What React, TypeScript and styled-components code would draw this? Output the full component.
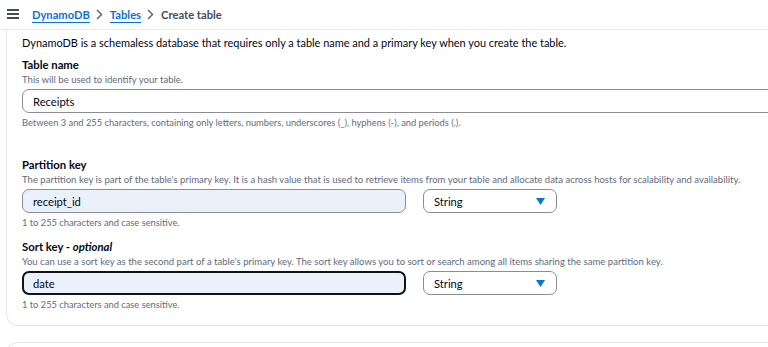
import React from "react";
import styled, { createGlobalStyle } from "styled-components";

const GlobalStyle = createGlobalStyle`
  html, body {
    margin: 0;
    padding: 0;
    background: #ffffff;
    overflow: hidden;
  }
  body {
    font-family: Lato, "Open Sans", sans-serif;
    color: #000716;
  }
`;

const Page = styled.div`
  width: 768px;
  height: 347px;
  overflow: hidden;
`;

const TopBar = styled.div`
  height: 30px;
  display: flex;
  align-items: center;
  padding: 0 0 1px 7px;
  border-bottom: 1px solid #e9ebed;
  box-sizing: border-box;
`;

const Burger = styled.button`
  width: 12px;
  height: 10px;
  padding: 0;
  margin: 0 13px 0 0;
  border: none;
  background: none;
  display: flex;
  flex-direction: column;
  justify-content: space-between;

  span {
    display: block;
    height: 2px;
    background: #414d5c;
  }
`;

const Crumbs = styled.nav`
  display: flex;
  align-items: center;
  font-size: 11.2px;
  font-weight: 700;
`;

const CrumbLink = styled.a`
  color: #0972d3;
  text-decoration: underline;
  text-decoration-thickness: 1px;
  text-underline-offset: 3px;
`;

const CrumbSep = styled.span`
  display: flex;
  margin: 0 7px 0 6px;
`;

const CrumbCurrent = styled.span`
  color: #414d5c;
`;

const Card = styled.section`
  margin: 0 -20px 0 6px;
  border: 1px solid #e3e5e8;
  border-top: none;
  border-radius: 0 0 12px 12px;
  padding: 5px 0 14px 15px;
`;

const NextCard = styled.div`
  margin: 16px -20px 0 6px;
  height: 20px;
  border: 1px solid #e3e5e8;
  border-bottom: none;
  border-radius: 12px 12px 0 0;
`;

const Intro = styled.p`
  margin: 0 0 6px;
  font-size: 10.95px;
  line-height: 16px;
`;

const Field = styled.div<{ $gap?: number }>`
  margin-top: ${(p) => p.$gap ?? 0}px;
`;

const Label = styled.div`
  font-size: 11.3px;
  font-weight: 700;
  line-height: 16px;

  em {
    font-style: italic;
  }
`;

const Description = styled.div`
  font-size: 9.55px;
  line-height: 13px;
  color: #5f6b7a;
  margin-bottom: 3px;
`;

const Constraint = styled.div`
  font-size: 9.3px;
  line-height: 13px;
  color: #5f6b7a;
  margin-top: 3px;
`;

const Row = styled.div`
  display: flex;
  gap: 17px;
`;

const Input = styled.div<{ $width?: number; $filled?: boolean; $focused?: boolean }>`
  box-sizing: border-box;
  height: 24px;
  width: ${(p) => (p.$width ? `${p.$width}px` : "auto")};
  flex: ${(p) => (p.$width ? "none" : "1")};
  display: flex;
  align-items: center;
  font-size: 11.2px;
  border-radius: 7px;
  border: ${(p) => (p.$focused ? "2px solid #0f141a" : "1px solid #8c8c94")};
  padding-left: ${(p) => (p.$focused ? "9px" : "10px")};
  background: ${(p) => (p.$filled ? "#eaf1fb" : "#ffffff")};
`;

const Select = styled.div`
  box-sizing: border-box;
  width: 134px;
  height: 24px;
  display: flex;
  align-items: center;
  justify-content: space-between;
  padding: 0 11px 0 10px;
  border: 1px solid #8c8c94;
  border-radius: 7px;
  font-size: 11.2px;
`;

const Chevron = () => (
  <svg width="7" height="11" viewBox="0 0 7 11">
    <path d="M1 1l4.5 4.5L1 10" fill="none" stroke="#5f6b7a" strokeWidth="1.5" />
  </svg>
);

const Caret = () => (
  <svg width="9" height="7" viewBox="0 0 9 7">
    <path d="M0 0h9L4.5 7z" fill="#0972d3" />
  </svg>
);

const TypeSelect = () => (
  <Select>
    <span>String</span>
    <Caret />
  </Select>
);

export default function App() {
  return (
    <Page>
      <GlobalStyle />
      <TopBar>
        <Burger aria-label="Menu">
          <span />
          <span />
          <span />
        </Burger>
        <Crumbs>
          <CrumbLink>DynamoDB</CrumbLink>
          <CrumbSep>
            <Chevron />
          </CrumbSep>
          <CrumbLink>Tables</CrumbLink>
          <CrumbSep>
            <Chevron />
          </CrumbSep>
          <CrumbCurrent>Create table</CrumbCurrent>
        </Crumbs>
      </TopBar>
      <Card>
        <Intro>
          DynamoDB is a schemaless database that requires only a table name and a primary key when you
          create the table.
        </Intro>
        <Field>
          <Label>Table name</Label>
          <Description>This will be used to identify your table.</Description>
          <Input>Receipts</Input>
          <Constraint>
            Between 3 and 255 characters, containing only letters, numbers, underscores (_), hyphens (-),
            and periods (.).
          </Constraint>
        </Field>
        <Field $gap={28}>
          <Label>Partition key</Label>
          <Description>
            The partition key is part of the table's primary key. It is a hash value that is used to
            retrieve items from your table and allocate data across hosts for scalability and availability.
          </Description>
          <Row>
            <Input $width={384} $filled>
              receipt_id
            </Input>
            <TypeSelect />
          </Row>
          <Constraint>1 to 255 characters and case sensitive.</Constraint>
        </Field>
        <Field $gap={10}>
          <Label>
            Sort key - <em>optional</em>
          </Label>
          <Description>
            You can use a sort key as the second part of a table's primary key. The sort key allows you to
            sort or search among all items sharing the same partition key.
          </Description>
          <Row>
            <Input $width={384} $filled $focused>
              date
            </Input>
            <TypeSelect />
          </Row>
          <Constraint>1 to 255 characters and case sensitive.</Constraint>
        </Field>
      </Card>
      <NextCard />
    </Page>
  );
}
